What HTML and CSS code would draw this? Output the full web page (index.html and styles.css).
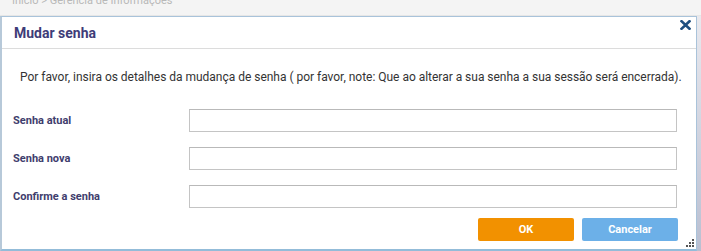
FILE: index.html
```html
<!DOCTYPE html>
<html lang="pt">
<head>
<meta charset="utf-8">
<link rel="stylesheet" href="styles.css">
</head>
<body>
<div class="page">
  <div class="crumbs">Início &gt; Gerência de Informações</div>
  <div class="main">
    <div class="dialog">
      <div class="dlg-head">
        <span class="dlg-title">Mudar senha</span>
        <button class="dlg-close" aria-label="Fechar">
          <svg width="11" height="10" viewBox="0 0 11 10"><path d="M1.5 1.2 L9.5 8.8 M9.5 1.2 L1.5 8.8" stroke="#1f4f80" stroke-width="2.6" stroke-linecap="square"/></svg>
        </button>
      </div>
      <div class="dlg-body">
        <p class="desc">Por favor, insira os detalhes da mudança de senha ( por favor, note: Que ao alterar a sua senha a sua sessão será encerrada).</p>
        <div class="form">
          <div class="row"><label class="lbl">Senha atual</label><input class="inp" type="password"></div>
          <div class="row"><label class="lbl">Senha nova</label><input class="inp" type="password"></div>
          <div class="row"><label class="lbl">Confirme a senha</label><input class="inp" type="password"></div>
        </div>
        <div class="actions">
          <button class="btn btn-ok">OK</button>
          <button class="btn btn-cancel">Cancelar</button>
        </div>
        <div class="grip">
          <svg width="8" height="8" viewBox="0 0 8 8" fill="#555"><rect x="6" y="0" width="2" height="2"/><rect x="3" y="3" width="2" height="2"/><rect x="6" y="3" width="2" height="2"/><rect x="0" y="6" width="2" height="2"/><rect x="3" y="6" width="2" height="2"/><rect x="6" y="6" width="2" height="2"/></svg>
        </div>
      </div>
    </div>
    <div class="side"></div>
  </div>
</div>
</body>
</html>
```
FILE: styles.css
```css
* { box-sizing: border-box; }
html, body { margin: 0; padding: 0; }
body {
  background: #f3f3f3;
  font-family: Roboto, "Liberation Sans", Arial, sans-serif;
  width: 701px;
  height: 251px;
  overflow: hidden;
}
.page { display: flex; flex-direction: column; }
.crumbs {
  height: 16px;
  line-height: 2px;
  padding-left: 12px;
  font-size: 11px;
  color: #b8b8b8;
  overflow: hidden;
  border-bottom: 1px solid #e6e6e6;
  background: #f4f4f4;
}
.main { display: flex; }
.dialog {
  width: 697px;
  height: 235px;
  background: #fff;
  border: 1px solid #a9c3da;
  border-left: 2px solid #b7c9d9;
  border-bottom: 2px solid #93bcd9;
  display: flex;
  flex-direction: column;
}
.side {
  width: 4px;
  background: linear-gradient(#e9e9ee, #b9bfd1);
}
.dlg-head {
  height: 32px;
  border-bottom: 1px solid #dcdcdc;
  display: flex;
  align-items: center;
  justify-content: space-between;
  padding: 0 5px 0 12px;
}
.dlg-title {
  font-size: 14px;
  font-weight: 700;
  color: #3e3c78;
}
.dlg-close {
  border: 0;
  background: none;
  padding: 0;
  align-self: flex-start;
  margin-top: 3px;
  display: flex;
}
.dlg-body {
  flex: 1;
  position: relative;
  padding: 20px 0 0 11px;
}
.desc {
  margin: 0 0 0 7px;
  font-size: 12px;
  letter-spacing: -0.02px;
  color: #333;
  line-height: 16px;
  white-space: nowrap;
}
.form {
  margin-top: 24px;
  display: flex;
  flex-direction: column;
  gap: 15px;
}
.row {
  display: flex;
  align-items: center;
}
.lbl {
  width: 176px;
  font-size: 11px;
  font-weight: 700;
  color: #3f3d6d;
}
.inp {
  width: 488px;
  height: 23px;
  border: 1px solid #c4c4c4;
  border-top-color: #b9b9b9;
  background: #fff;
}
.actions {
  display: flex;
  gap: 8px;
  margin-top: 10px;
  padding-left: 465px;
}
.btn {
  width: 96px;
  height: 23px;
  border: 0;
  border-radius: 2px;
  color: #fff;
  font-family: Roboto, "Liberation Sans", Arial, sans-serif;
  font-weight: 700;
  font-size: 11px;
}
.btn-ok { background: #f29100; }
.btn-cancel { background: #6cb0e8; }
.grip {
  position: absolute;
  right: 2px;
  bottom: 2px;
  display: flex;
}
```
